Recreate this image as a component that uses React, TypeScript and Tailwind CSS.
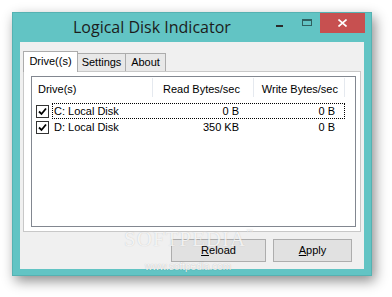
import React from "react";

function Check() {
  return (
    <div className="w-[13px] h-[13px] border border-[#333333] bg-white flex items-center justify-center shrink-0">
      <svg width="9" height="9" viewBox="0 0 9 9">
        <path d="M1 4.5 L3.5 7 L8 1.5" fill="none" stroke="#000" strokeWidth="1.8" />
      </svg>
    </div>
  );
}

function Row({ name, read, write, focus }: { name: string; read: string; write: string; focus?: boolean }) {
  return (
    <div className="flex h-[16px] items-center pl-[4px]">
      <Check />
      <div
        className={
          "ml-[3px] flex h-[16px] w-[293px] items-center border border-dotted " +
          (focus ? "border-black" : "border-transparent")
        }
      >
        <div className="w-[100px] pl-[1px] whitespace-nowrap">{name}</div>
        <div className="w-[100px] pr-[14px] text-right whitespace-nowrap">{read}</div>
        <div className="w-[91px] pr-[9px] text-right whitespace-nowrap">{write}</div>
      </div>
    </div>
  );
}

export default function App() {
  return (
    <div className="relative w-[392px] h-[297px] bg-white pl-[12px] pt-[12px] font-['Liberation_Sans',Arial,sans-serif] text-[11px] text-black overflow-hidden">
      <div className="w-[360px] h-[264px] bg-[#62C4C4] border border-[#55B2B2] shadow-[3px_5px_12px_rgba(0,0,0,0.45)] flex flex-col">
        {/* title bar */}
        <div className="flex h-[29px] items-start shrink-0">
          <div className="ml-[60px] leading-[29px] text-[16px] text-[#1c1c1c] font-['Open_Sans','Noto_Sans',sans-serif] whitespace-nowrap">
            Logical Disk Indicator
          </div>
          <div className="flex-1" />
          <div className="mt-[12px] w-[7px] h-[2px] bg-[#2b2b2b]" />
          <div className="ml-[19px] mt-[6px] w-[10px] h-[7px] border border-[#2f5f5f] border-t-2" />
          <div className="ml-[8px] mr-[6px] w-[45px] h-[20px] bg-[#C75050] flex items-center justify-center">
            <svg width="9" height="8" viewBox="0 0 9 8">
              <path d="M0.5 0.5 L8.5 7.5 M8.5 0.5 L0.5 7.5" stroke="#fff" strokeWidth="1.6" />
            </svg>
          </div>
        </div>
        {/* client area */}
        <div className="ml-[7px] w-[344px] h-[227px] bg-[#F0F0F0] flex flex-col">
          {/* tabs */}
          <div className="flex items-end pl-[3px] pt-[8px] h-[29px]">
            <div className="relative z-10 -mb-px w-[55px] h-[21px] bg-white border border-b-0 border-[#ACACAC] flex items-center justify-center pb-[1px]">
              Drive((s)
            </div>
            <div className="w-[48px] h-[18px] bg-[#E8E8E8] border border-l-0 border-b-0 border-[#ACACAC] flex items-center justify-center">
              Settings
            </div>
            <div className="w-[40px] h-[18px] bg-[#E8E8E8] border border-l-0 border-b-0 border-[#ACACAC] flex items-center justify-center">
              About
            </div>
          </div>
          {/* panel */}
          <div className="ml-[3px] w-[338px] h-[161px] bg-white border border-[#C8C8C8] pl-[7px] pt-[4px]">
            <div className="w-[325px] h-[151px] border border-[#828790] bg-white">
              <div className="flex h-[24px] items-start">
                <div className="w-[120px] h-[19px] mt-[1px] pl-[6px] flex items-center pt-[3px]">Drive(s)</div>
                <div className="w-px h-[19px] mt-[1px] bg-[#E5E9EF]" />
                <div className="w-[100px] h-[19px] mt-[1px] pr-[13px] flex items-center justify-end pt-[3px] whitespace-nowrap">Read Bytes/sec</div>
                <div className="w-px h-[19px] mt-[1px] bg-[#E5E9EF]" />
                <div className="w-[90px] h-[19px] mt-[1px] pr-[6px] flex items-center justify-end pt-[3px] whitespace-nowrap">Write Bytes/sec</div>
                <div className="w-px h-[19px] mt-[1px] bg-[#E5E9EF]" />
              </div>
              <div className="pt-[2px]">
                <Row name="C: Local Disk" read="0 B" write="0 B" focus />
                <Row name="D: Local Disk" read="350 KB" write="0 B" />
              </div>
            </div>
          </div>
          {/* buttons */}
          <div className="flex justify-end gap-[7px] pr-[12px] mt-[7px]">
            <div className="w-[95px] h-[23px] bg-[#E1E1E1] border border-[#ADADAD] flex items-center justify-center">
              <span><span className="underline">R</span>eload</span>
            </div>
            <div className="w-[79px] h-[23px] bg-[#E1E1E1] border border-[#ADADAD] flex items-center justify-center">
              <span><span className="underline">A</span>pply</span>
            </div>
          </div>
        </div>
      </div>
      {/* watermark */}
      <div className="absolute left-[124px] top-[229px] leading-none text-[21px] tracking-[1px] text-white/80 [text-shadow:0_0_1px_rgba(0,0,0,0.22)] font-['Liberation_Serif',serif] pointer-events-none">
        SOFTPEDIA<span className="text-[7px] align-top">™</span>
      </div>
      <div className="absolute left-[145px] top-[259px] text-[10px] text-white/90 [text-shadow:0_0_1px_rgba(0,0,0,0.3)] pointer-events-none">
        www.softpedia.com
      </div>
    </div>
  );
}
